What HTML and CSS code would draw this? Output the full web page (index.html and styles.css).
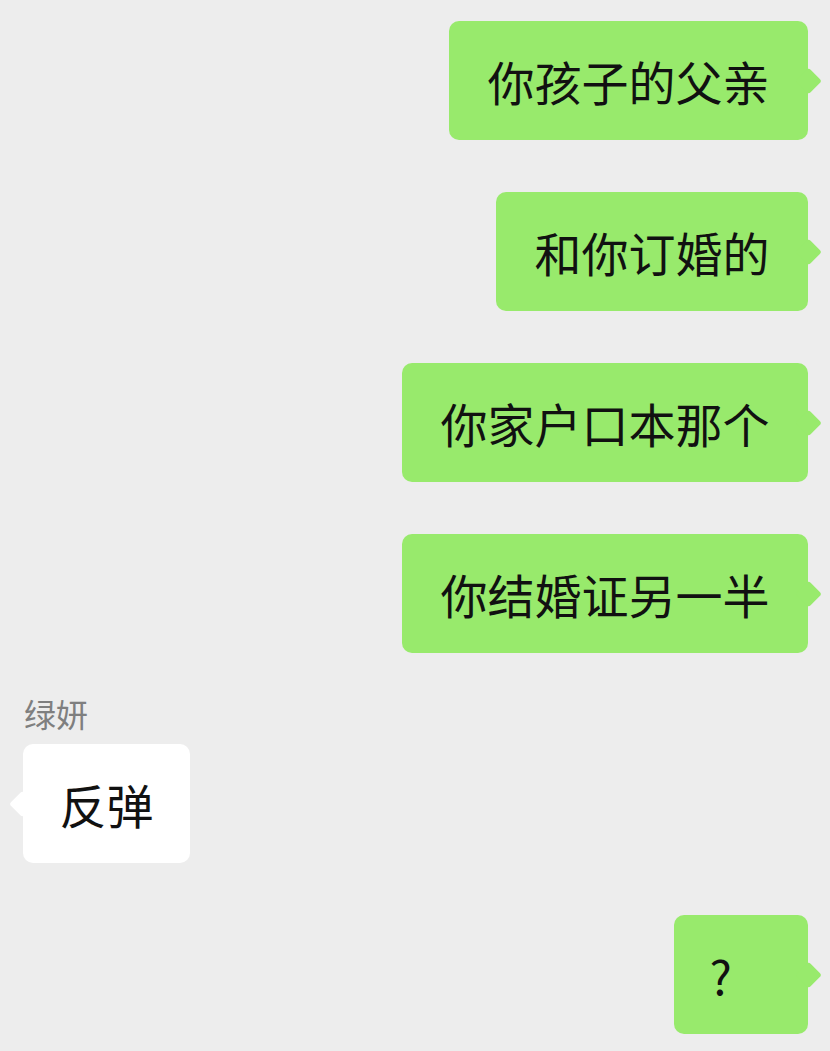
FILE: index.html
```html
<!DOCTYPE html>
<html lang="zh-CN">
<head>
  <meta charset="UTF-8" />
  <meta name="viewport" content="width=device-width, initial-scale=1.0" />
  <title>聊天</title>
  <link rel="stylesheet" href="styles.css">
</head>
<body>
  <div class="chat">
    <div class="msg mine"><div class="bubble">你孩子的父亲</div></div>
    <div class="msg mine"><div class="bubble">和你订婚的</div></div>
    <div class="msg mine"><div class="bubble">你家户口本那个</div></div>
    <div class="msg mine"><div class="bubble">你结婚证另一半</div></div>
    <div class="msg theirs">
      <div class="name">绿妍</div>
      <div class="bubble">反弹</div>
    </div>
    <div class="msg mine"><div class="bubble short">?</div></div>
  </div>
</body>
</html>
```

FILE: styles.css
```css
body {
  margin: 0;
  background: #ededed;
  font-family: "Noto Sans CJK SC", "Noto Sans", sans-serif;
  color: #111;
}
.chat {
  padding: 21px 22px 0 23px;
  display: flex;
  flex-direction: column;
  gap: 52px;
}
.msg { display: flex; flex-direction: column; }
.mine { align-items: flex-end; }
.theirs { align-items: flex-start; margin-top: -12px; }
.bubble {
  position: relative;
  background: #98ea6c;
  border-radius: 10px;
  padding: 32px 38.5px;
  font-size: 47px;
  line-height: 55px;
  min-height: 55px;
  white-space: nowrap;
}
.bubble::after {
  content: "";
  position: absolute;
  top: 50%;
  width: 19px;
  height: 19px;
  background: inherit;
  border-radius: 3px;
  transform: translateY(-50%) rotate(45deg);
}
.mine .bubble::after { right: -10px; }
.theirs .bubble { background: #fff; margin-top: 11px; padding: 32px 36.5px; }
.theirs .bubble::after { left: -10px; }
.bubble.short { min-width: 60px; padding-left: 36px; }
.name {
  font-size: 32px;
  line-height: 40px;
  color: #7f7f7f;
  margin-left: 1px;
}
```
